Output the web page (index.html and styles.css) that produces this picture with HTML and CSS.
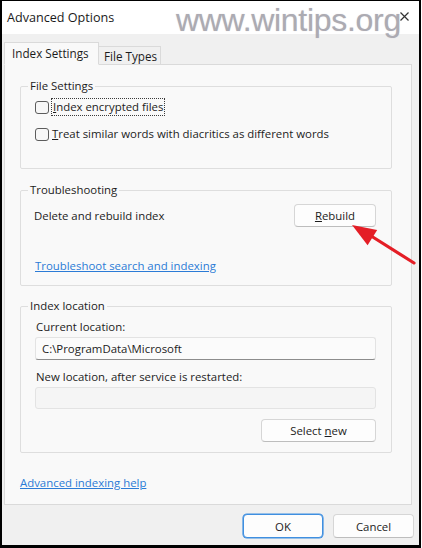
FILE: index.html
```html
<!DOCTYPE html>
<html lang="en">
<head>
  <meta charset="UTF-8" />
  <meta name="viewport" content="width=device-width, initial-scale=1.0"/>
  <title>Advanced Options</title>
  <link rel="stylesheet" href="styles.css">
</head>
<body>
  <div class="window">
    <div class="titlebar">
      <span class="title">Advanced Options</span>
      <svg class="close" width="9" height="9" viewBox="0 0 9 9">
        <path d="M0.5 0.5 L8.5 8.5 M8.5 0.5 L0.5 8.5" stroke="#333" stroke-width="1.2" fill="none"/>
      </svg>
      <div class="watermark">www.wintips.org</div>
    </div>

    <div class="dialog">
      <div class="tabs">
        <div class="tab active">Index Settings</div>
        <div class="tab">File Types</div>
      </div>

      <div class="panel">
        <fieldset class="group files">
          <legend>File Settings</legend>
          <label class="check">
            <span class="box"></span>
            <span class="focus"><u>I</u>ndex encrypted files</span>
          </label>
          <label class="check second">
            <span class="box"></span>
            <span><u>T</u>reat similar words with diacritics as different words</span>
          </label>
        </fieldset>

        <fieldset class="group trouble">
          <legend>Troubleshooting</legend>
          <div class="row">
            <span>Delete and rebuild index</span>
            <button class="btn rebuild"><u>R</u>ebuild</button>
          </div>
          <a class="link trouble-link" href="#">Troubleshoot search and indexing</a>
        </fieldset>

        <fieldset class="group location">
          <legend>Index location</legend>
          <div class="field-label">Current location:</div>
          <div class="textbox">C:\ProgramData\Microsoft</div>
          <div class="field-label next">New location, after service is restarted:</div>
          <div class="textbox disabled"></div>
          <div class="row end">
            <button class="btn select">Select <u>n</u>ew</button>
          </div>
        </fieldset>

        <a class="link help-link" href="#">Advanced indexing help</a>
      </div>

      <div class="footer">
        <button class="btn default">OK</button>
        <button class="btn">Cancel</button>
      </div>
    </div>
  </div>

  <svg class="arrow" width="422" height="548" viewBox="0 0 422 548">
    <line x1="414" y1="263" x2="368" y2="234" stroke="#e41e26" stroke-width="3.2" stroke-linecap="round"/>
    <polygon points="352,225 377.2,230.1 367.6,245.3" fill="#e41e26"/>
  </svg>
</body>
</html>
```

FILE: styles.css
```css
body {
  margin: 0;
  background: #ffffff;
  font-family: "Open Sans", "Noto Sans", sans-serif;
  font-size: 11.4px;
  color: #1c1c1c;
}

.window {
  width: 421px;
  height: 548px;
  box-sizing: border-box;
  border-style: solid;
  border-color: #000;
  border-width: 1px 2px 3px 2px;
  display: flex;
  flex-direction: column;
  background: #f0f0f0;
}

.titlebar {
  position: relative;
  height: 33px;
  flex: none;
  background: #ffffff;
  display: flex;
  align-items: center;
  justify-content: space-between;
  padding: 0 10px 0 5px;
}

.title {
  font-size: 12.6px;
  color: #1a1a1a;
}

.close {
  margin-top: -2px;
}

.watermark {
  position: absolute;
  left: 174px;
  top: 3px;
  font-family: "Liberation Sans", Arial, sans-serif;
  font-size: 32px;
  line-height: 32px;
  color: #acabb2;
  text-shadow: 0 0 1px rgba(90, 80, 110, 0.25);
  letter-spacing: -0.3px;
}

.dialog {
  flex: 1;
  display: flex;
  flex-direction: column;
  padding: 8px 6px 0 2px;
}

.tabs {
  display: flex;
  align-items: flex-end;
  margin-bottom: -1px;
}

.tab {
  box-sizing: border-box;
  height: 19px;
  width: 62px;
  padding-left: 5px;
  line-height: 19px;
  font-size: 11.7px;
  background: #f0f0f0;
  border: 1px solid #dadada;
  border-bottom: none;
  border-left: none;
}

.tab.active {
  position: relative;
  z-index: 1;
  width: 95px;
  height: 23px;
  padding-left: 7px;
  line-height: 21px;
  background: #f9f9f9;
  border-left: 1px solid #dadada;
  border-bottom: 1px solid #f9f9f9;
}

.panel {
  box-sizing: border-box;
  width: 408px;
  height: 441px;
  background: #f9f9f9;
  border: 1px solid #dadada;
  padding: 13px 19px 0 15px;
  display: flex;
  flex-direction: column;
  align-items: flex-start;
}

.group {
  box-sizing: border-box;
  width: 100%;
  margin: 0;
  min-inline-size: 0;
  border: 1px solid #dedede;
  border-radius: 2px;
  padding: 0 15px 0 14px;
  display: flex;
  flex-direction: column;
}

.group legend {
  margin-left: -7px;
  padding: 0 2px;
  line-height: 16px;
}

.files {
  padding-top: 4px;
  padding-bottom: 25px;
}

.check {
  display: flex;
  align-items: center;
  height: 18px;
  line-height: 16px;
}

.check.second {
  margin-top: 9px;
}

.box {
  box-sizing: border-box;
  width: 14px;
  height: 13px;
  border: 1px solid #5c5c5c;
  border-radius: 3px;
  background: #f7f7f7;
  margin-right: 3px;
  flex: none;
}

.focus {
  outline: 1px dotted #3a3a3a;
  outline-offset: 0;
  padding: 0 1px;
}

.trouble {
  margin-top: 13px;
  padding-top: 6px;
  padding-bottom: 11px;
  padding-left: 13px;
}

.trouble legend {
  margin-left: -6px;
}

.row {
  display: flex;
  align-items: center;
  justify-content: space-between;
}

.row.end {
  justify-content: flex-end;
  margin-top: 10px;
}

.btn {
  box-sizing: border-box;
  height: 23px;
  font-family: inherit;
  font-size: 11.4px;
  color: #1c1c1c;
  background: #fdfdfd;
  border: 1px solid #d6d6d6;
  border-bottom-color: #bdbdbd;
  border-radius: 4px;
  padding: 0;
}

.rebuild {
  width: 82px;
}

.select {
  width: 115px;
}

.link {
  color: #2b7bd6;
  text-decoration: underline;
  line-height: 16px;
}

.trouble-link {
  margin-top: 31px;
  align-self: flex-start;
  margin-left: 1px;
}

.location {
  margin-top: 12px;
  padding-top: 5px;
  padding-bottom: 10px;
}

.field-label {
  line-height: 16px;
  margin-left: 1px;
}

.field-label.next {
  margin-top: 9px;
}

.textbox {
  box-sizing: border-box;
  height: 23px;
  margin-top: 2px;
  padding-left: 6px;
  line-height: 21px;
  background: #fbfbfb;
  border: 1px solid #e3e3e3;
  border-bottom-color: #8c8c8c;
  border-radius: 3px;
}

.textbox.disabled {
  height: 22px;
  background: #f5f5f5;
  border-bottom-color: #e3e3e3;
}

.help-link {
  margin-top: 22px;
}

.footer {
  display: flex;
  justify-content: flex-end;
  gap: 10px;
  margin-top: 9px;
  margin-right: -1px;
}

.footer .btn {
  width: 81px;
  height: 24px;
}

.footer .btn.default {
  width: 80px;
  border: 1px solid #3f8fe0;
  box-shadow: 0 0 0 0.6px #3f8fe0;
}

.arrow {
  position: absolute;
  left: 0;
  top: 0;
  pointer-events: none;
}
```
